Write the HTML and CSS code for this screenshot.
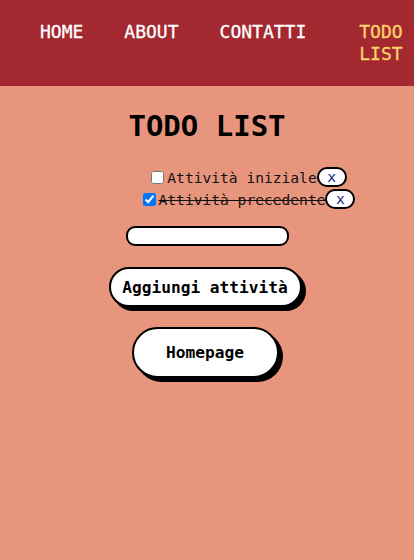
FILE: index.html
```html
<!DOCTYPE html>
<html lang="it">
<head>
<meta charset="utf-8">
<title>Todo List</title>
<link rel="stylesheet" href="styles.css">
</head>
<body>
<header class="topbar">
  <nav>
    <ul class="menu">
      <li class="menu-item">HOME</li>
      <li class="menu-item">ABOUT</li>
      <li class="menu-item">CONTATTI</li>
      <li class="menu-item menu-item--active">TODO LIST</li>
    </ul>
  </nav>
</header>
<main class="page">
  <h1 class="title">TODO LIST</h1>
  <ul class="todo">
    <li class="todo-item"><input type="checkbox" class="todo-check"><span class="todo-text">Attività iniziale</span><button class="todo-del">x</button></li>
    <li class="todo-item"><input type="checkbox" class="todo-check" checked><span class="todo-text todo-text--done">Attività precedente</span><button class="todo-del">x</button></li>
  </ul>
  <input type="text" class="new-task">
  <button class="btn btn-add">Aggiungi attività</button>
  <button class="btn btn-home">Homepage</button>
</main>
</body>
</html>
```
FILE: styles.css
```css
html, body {
  margin: 0;
  padding: 0;
}
body {
  background: #e8957d;
  font-family: "DejaVu Sans Mono", "Liberation Mono", monospace;
  height: 560px;
}
.topbar {
  background: #a3282f;
  height: 86px;
  box-sizing: border-box;
  padding: 21px 0 0 40px;
}
.menu {
  list-style: none;
  margin: 0;
  padding: 0;
  display: flex;
  gap: 41px;
  align-items: flex-start;
}
.menu-item {
  color: #ffffff;
  font-size: 18px;
  line-height: 22px;
  white-space: nowrap;
  -webkit-text-stroke: 0.3px currentColor;
}
.menu-item--active {
  color: #f9d46a;
  white-space: normal;
  width: 4ch;
  margin-left: 12px;
}
.page {
  display: flex;
  flex-direction: column;
  align-items: center;
}
.title {
  margin: 23px 0 0;
  font-size: 29px;
  line-height: 34px;
  font-weight: bold;
  color: #000;
}
.todo {
  list-style: none;
  margin: 23px 0 0;
  padding: 0 0 0 80px;
  align-self: stretch;
  display: flex;
  flex-direction: column;
  align-items: center;
}
.todo-item {
  height: 22px;
  display: flex;
  align-items: center;
  font-size: 14.6px;
  color: #111;
}
.todo-check {
  width: 13px;
  height: 13px;
  margin: 0 3px 0 4px;
}
.todo-text--done {
  text-decoration: line-through;
}
.todo-del {
  font-family: "DejaVu Sans Mono", "Liberation Mono", monospace;
  font-size: 14.6px;
  color: #14238a;
  background: #fff;
  border: 2px solid #000;
  border-radius: 10px;
  width: 30px;
  height: 20px;
  padding: 0;
  line-height: 16px;
}
.new-task {
  margin-top: 16px;
  width: 163px;
  height: 20px;
  box-sizing: border-box;
  border: 2px solid #000;
  border-radius: 9px;
  background: #fff;
  padding: 0 6px;
}
.btn {
  font-family: "DejaVu Sans Mono", "Liberation Mono", monospace;
  font-weight: bold;
  font-size: 16.2px;
  color: #000;
  background: #fff;
  border: 2px solid #000;
  box-shadow: 4px 4px 0 #000;
  box-sizing: border-box;
  margin-right: 4px;
  padding: 0;
}
.btn-add {
  margin-top: 21px;
  width: 193px;
  height: 40px;
  border-radius: 22px;
}
.btn-home {
  margin-top: 20px;
  width: 147px;
  height: 51px;
  border-radius: 26px;
}
```
